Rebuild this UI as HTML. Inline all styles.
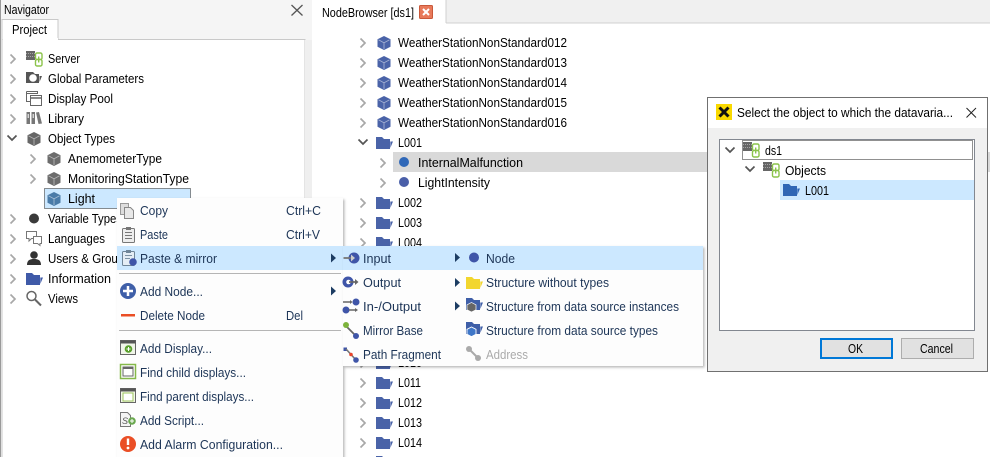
<!DOCTYPE html>
<html><head><meta charset="utf-8"><title>Navigator</title>
<style>
html,body{margin:0;padding:0;background:#fff;width:990px;height:457px;overflow:hidden}
svg{display:block;position:absolute;left:0;top:0}
text{font-family:"Liberation Sans",sans-serif;font-size:12.5px;fill:#000}
.m text,text.m{fill:#1d3557}
</style></head><body>
<svg width="990" height="457" viewBox="0 0 990 457">
<defs>
<filter id="sh" x="-5%" y="-5%" width="112%" height="112%"><feDropShadow dx="1.5" dy="1.5" stdDeviation="1.200" flood-color="#000" flood-opacity=".28"/></filter>
<path id="cr" d="M-2.500 -4.500L2 0L-2.500 4.500" fill="none" stroke="#a8a8a8" stroke-width="1.700"/>
<path id="cd" d="M-4.500 -2.500L0 2L4.500 -2.500" fill="none" stroke="#555" stroke-width="1.700"/>
<g id="cube"><path d="M7 0L13.500 3.200V10.800L7 14L.5 10.800V3.200Z" fill="currentColor"/><path d="M1.500 3.800L7 6.800L12.500 3.800M7 6.800V13" fill="none" stroke="#fff" stroke-opacity=".55" stroke-width=".8"/></g>
<g id="fold"><path d="M0 0H6L8 2H14V12H0Z" fill="currentColor"/><path d="M14.300 4.500H17L14.300 11Z" fill="currentColor"/></g>
<path id="arr" d="M0 -4.500L5 0L0 4.500Z" fill="#1d3d63"/>
<g id="srv"><rect x="0" y="0" width="9" height="9" fill="#666"/><path d="M0 2.500h9M0 5.500h9" stroke="#bbb" stroke-width=".7" stroke-dasharray="1 1"/><rect x="9.500" y="2" width="6.500" height="6.500" rx="1.500" fill="#fff" stroke="#8bc34a" stroke-width="1.400"/><rect x="9.500" y="8.500" width="6.500" height="6.500" rx="1.500" fill="#fff" stroke="#8bc34a" stroke-width="1.400"/><path d="M12.700 5.500v6" stroke="#8bc34a" stroke-width="1.400"/></g>
</defs>

<!-- left panel -->
<rect x="0" y="0" width="312" height="457" fill="#f5f5f5"/>
<rect x="0" y="0" width="1" height="457" fill="#9a9a9a"/>
<rect x="2" y="39.500" width="303" height="420" fill="#fff" stroke="#c9c9c9"/>
<rect x="305" y="40" width="7" height="417" fill="#efefef"/>
<path d="M2 39.500V19.500H58V40" fill="#fff" stroke="#c9c9c9"/>
<rect x="3" y="38" width="55" height="3" fill="#fff"/>
<text x="4" y="14" textLength="45" lengthAdjust="spacingAndGlyphs">Navigator</text>
<text x="12" y="34" textLength="35" lengthAdjust="spacingAndGlyphs">Project</text>
<path d="M291.500 5L302.500 15.500M302.500 5L291.500 15.500" stroke="#555" stroke-width="1.300"/>

<use href="#cr" x="13" y="59"/><use href="#cr" x="13" y="79"/><use href="#cr" x="13" y="99"/><use href="#cr" x="13" y="119"/>
<use href="#cd" x="12" y="138"/>
<use href="#cr" x="33" y="159"/><use href="#cr" x="33" y="179"/>
<use href="#cr" x="13" y="219"/><use href="#cr" x="13" y="239"/><use href="#cr" x="13" y="259"/><use href="#cr" x="13" y="279"/><use href="#cr" x="13" y="299"/>

<use href="#srv" x="26" y="51"/>
<!-- global params -->
<path d="M26 72H33L35 74H39V83H26Z" fill="#555"/><circle cx="33" cy="78" r="3.800" fill="#fff"/><path d="M39.500 76H42L39.500 82Z" fill="#555"/>
<!-- display pool -->
<path d="M26.500 91.500H37.500V94M26.500 91.500V101.500H30" fill="none" stroke="#666"/><path d="M26.500 93.500H37" stroke="#666"/>
<rect x="30.500" y="95.500" width="11" height="10" fill="#fff" stroke="#666"/><path d="M30.500 98H41.500" stroke="#666" stroke-width="1.500"/>
<!-- library -->
<path d="M26.500 112h3.500v12h-3.500zM31.500 112h3.500v12h-3.500z" fill="#777"/><path d="M28.200 114v4M33.200 114v4" stroke="#fff"/><path d="M36 112.500l3-.5 3 11.500-3.500 .5z" fill="#777"/>
<use href="#cube" x="27" y="132" style="color:#666"/>
<use href="#cube" x="47" y="152" style="color:#6c6c6c"/>
<use href="#cube" x="47" y="172" style="color:#6c6c6c"/>
<rect x="44.500" y="188.500" width="146" height="20" fill="#cce8ff" stroke="#222" stroke-dasharray="1 1"/>
<use href="#cube" x="47" y="192" style="color:#4a7ba8"/>
<circle cx="34" cy="218.500" r="5" fill="#3a3a3a"/>
<!-- languages -->
<path d="M26.500 231.500h10v7h-5l-2.500 2.500v-2.500h-2.500z" fill="#fff" stroke="#777"/><path d="M33.500 236.500h8v7h-1.500v2l-2.500-2h-4z" fill="#fff" stroke="#777"/>
<!-- users -->
<circle cx="34" cy="255" r="3.800" fill="#333"/><path d="M27 265c0-5 3-6 7-6s7 1 7 6z" fill="#333"/>
<use href="#fold" x="26" y="273" style="color:#3f5aa8"/>
<circle cx="31.500" cy="296" r="4.500" fill="none" stroke="#666" stroke-width="1.500"/><path d="M35 299.500L41 305.500" stroke="#666" stroke-width="2"/>

<text x="48" y="63" textLength="32" lengthAdjust="spacingAndGlyphs">Server</text>
<text x="48" y="83" textLength="96" lengthAdjust="spacingAndGlyphs">Global Parameters</text>
<text x="48" y="103" textLength="65" lengthAdjust="spacingAndGlyphs">Display Pool</text>
<text x="48" y="123" textLength="36" lengthAdjust="spacingAndGlyphs">Library</text>
<text x="48" y="143" textLength="67" lengthAdjust="spacingAndGlyphs">Object Types</text>
<text x="68" y="163" textLength="94" lengthAdjust="spacingAndGlyphs">AnemometerType</text>
<text x="68" y="183" textLength="121" lengthAdjust="spacingAndGlyphs">MonitoringStationType</text>
<text x="68" y="203" textLength="27" lengthAdjust="spacingAndGlyphs">Light</text>
<text x="48" y="223" textLength="74" lengthAdjust="spacingAndGlyphs">Variable Types</text>
<text x="48" y="243" textLength="57" lengthAdjust="spacingAndGlyphs">Languages</text>
<text x="48" y="263" textLength="82" lengthAdjust="spacingAndGlyphs">Users &amp; Groups</text>
<text x="48" y="283" textLength="63" lengthAdjust="spacingAndGlyphs">Information</text>
<text x="48" y="303" textLength="30" lengthAdjust="spacingAndGlyphs">Views</text>

<!-- node browser -->
<rect x="312" y="0" width="678" height="23" fill="#f0f0f0"/>
<rect x="312" y="22.500" width="678" height="1" fill="#d0d0d0"/>
<rect x="312" y="0" width="134" height="24" fill="#fff"/>
<rect x="445.500" y="0" width="1" height="23" fill="#d0d0d0"/>
<text x="322" y="17" textLength="92" lengthAdjust="spacingAndGlyphs">NodeBrowser [ds1]</text>
<rect x="419.500" y="5.500" width="13" height="13" rx="1" fill="#e8795a" stroke="#c9583a"/><path d="M423 9L429 15M429 9L423 15" stroke="#fff" stroke-width="2"/>

<rect x="393" y="152" width="597" height="20" fill="#d9d9d9"/>

<g>
<use href="#cr" x="363" y="43"/><use href="#cr" x="363" y="63"/><use href="#cr" x="363" y="83"/><use href="#cr" x="363" y="103"/><use href="#cr" x="363" y="123"/>
<use href="#cd" x="363" y="142"/>
<use href="#cr" x="383" y="163"/><use href="#cr" x="383" y="183"/>
<use href="#cr" x="363" y="203"/><use href="#cr" x="363" y="223"/><use href="#cr" x="363" y="243"/><use href="#cr" x="363" y="363"/>
<use href="#cr" x="363" y="383"/><use href="#cr" x="363" y="403"/><use href="#cr" x="363" y="423"/><use href="#cr" x="363" y="443"/>
<g style="color:#4a63a8">
<use href="#cube" x="377" y="36"/><use href="#cube" x="377" y="56"/><use href="#cube" x="377" y="76"/><use href="#cube" x="377" y="96"/><use href="#cube" x="377" y="116"/>
<use href="#fold" x="376" y="137"/><use href="#fold" x="376" y="197"/><use href="#fold" x="376" y="217"/><use href="#fold" x="376" y="237"/>
<use href="#fold" x="376" y="357"/><use href="#fold" x="376" y="377"/><use href="#fold" x="376" y="397"/><use href="#fold" x="376" y="417"/><use href="#fold" x="376" y="437"/><use href="#fold" x="376" y="456"/>
</g>
<circle cx="404" cy="162" r="5" fill="#3068b8"/>
<circle cx="404" cy="182" r="5" fill="#4a5fa8"/>
<text x="398" y="47" textLength="169" lengthAdjust="spacingAndGlyphs">WeatherStationNonStandard012</text>
<text x="398" y="67" textLength="169" lengthAdjust="spacingAndGlyphs">WeatherStationNonStandard013</text>
<text x="398" y="87" textLength="169" lengthAdjust="spacingAndGlyphs">WeatherStationNonStandard014</text>
<text x="398" y="107" textLength="169" lengthAdjust="spacingAndGlyphs">WeatherStationNonStandard015</text>
<text x="398" y="127" textLength="169" lengthAdjust="spacingAndGlyphs">WeatherStationNonStandard016</text>
<text x="398" y="147" textLength="24" lengthAdjust="spacingAndGlyphs">L001</text>
<text x="418" y="167" textLength="105" lengthAdjust="spacingAndGlyphs">InternalMalfunction</text>
<text x="418" y="187" textLength="72" lengthAdjust="spacingAndGlyphs">LightIntensity</text>
<text x="398" y="207" textLength="24" lengthAdjust="spacingAndGlyphs">L002</text>
<text x="398" y="227" textLength="24" lengthAdjust="spacingAndGlyphs">L003</text>
<text x="398" y="247" textLength="24" lengthAdjust="spacingAndGlyphs">L004</text>
<text x="398" y="367" textLength="24" lengthAdjust="spacingAndGlyphs">L010</text>
<text x="398" y="387" textLength="23" lengthAdjust="spacingAndGlyphs">L011</text>
<text x="398" y="407" textLength="24" lengthAdjust="spacingAndGlyphs">L012</text>
<text x="398" y="427" textLength="24" lengthAdjust="spacingAndGlyphs">L013</text>
<text x="398" y="447" textLength="24" lengthAdjust="spacingAndGlyphs">L014</text>
</g>

<!-- context menu -->
<g class="m">
<rect x="117" y="198" width="226" height="262" fill="#fdfdfd" filter="url(#sh)"/>
<rect x="117" y="246" width="226" height="24" fill="#cce8ff"/>
<rect x="119" y="273" width="222" height="1" fill="#b5b5b5"/>
<rect x="119" y="330" width="222" height="1" fill="#b5b5b5"/>
<!-- copy -->
<rect x="120.500" y="203.500" width="8" height="11" fill="#ddd" stroke="#999"/><path d="M124.500 207.500h6l3 3v8h-9z" fill="#e8e8e8" stroke="#888"/>
<!-- paste -->
<rect x="122.500" y="228.500" width="12" height="14" rx="1" fill="#eee" stroke="#777"/><rect x="126" y="227" width="5" height="3" fill="#777"/><path d="M125 232.500h7M125 235.500h7M125 238.500h7" stroke="#777"/>
<!-- paste mirror -->
<rect x="122.500" y="251.500" width="12" height="14" rx="1" fill="#e4edf5" stroke="#6f8598"/><rect x="126" y="250" width="5" height="3" fill="#6f8598"/><path d="M125 255.500h7M125 258.500h5" stroke="#7d93a5"/><circle cx="133" cy="262" r="3.800" fill="#3f55a8"/>
<!-- add node -->
<circle cx="128" cy="291" r="8" fill="#3f5fa8"/><path d="M128 286v10M123 291h10" stroke="#fff" stroke-width="2.500"/>
<!-- delete -->
<rect x="121" y="314" width="14" height="2.500" fill="#ea4e25"/>
<!-- add display -->
<rect x="120.500" y="340.500" width="15" height="14" fill="#f0f5e8" stroke="#666"/><rect x="120.500" y="340.500" width="15" height="3" fill="#555"/><circle cx="128.500" cy="349" r="3.800" fill="#5aa02c"/><path d="M126.500 349h4M128.500 347v4" stroke="#fff"/>
<!-- find child -->
<rect x="120.500" y="364.500" width="15" height="14" fill="#fff" stroke="#85b84a" stroke-width="1.500"/><rect x="123" y="367" width="10" height="9" fill="#fff" stroke="#666"/><rect x="123" y="367" width="10" height="2" fill="#666"/>
<!-- find parent -->
<rect x="120.500" y="388.500" width="15" height="14" fill="#f4f8e8" stroke="#666"/><rect x="120.500" y="388.500" width="15" height="3" fill="#555"/><rect x="123" y="393" width="10" height="8" fill="#fff" stroke="#9cc45e"/>
<!-- add script -->
<path d="M120.500 412.500h7l3 3v11h-10z" fill="#f4f4f4" stroke="#777"/><text x="122" y="424" style="font-size:9px;font-style:italic;fill:#555">S</text><circle cx="132" cy="421" r="3.800" fill="#6aa84f"/><path d="M130 421h4M132 419v4" stroke="#fff"/>
<!-- alarm -->
<circle cx="128" cy="444" r="8" fill="#ea4e25"/><path d="M128 438.500v6.500" stroke="#fff" stroke-width="2.400"/><circle cx="128" cy="448" r="1.400" fill="#fff"/>
<use href="#arr" x="331" y="291"/>

<text x="140" y="215" textLength="28" lengthAdjust="spacingAndGlyphs">Copy</text>
<text x="286" y="215" textLength="35" lengthAdjust="spacingAndGlyphs">Ctrl+C</text>
<text x="140" y="239" textLength="28" lengthAdjust="spacingAndGlyphs">Paste</text>
<text x="286" y="239" textLength="34" lengthAdjust="spacingAndGlyphs">Ctrl+V</text>
<text x="140" y="263" textLength="77" lengthAdjust="spacingAndGlyphs">Paste &amp; mirror</text>
<text x="140" y="296" textLength="63" lengthAdjust="spacingAndGlyphs">Add Node...</text>
<text x="140" y="320" textLength="65" lengthAdjust="spacingAndGlyphs">Delete Node</text>
<text x="286" y="320" textLength="17" lengthAdjust="spacingAndGlyphs">Del</text>
<text x="140" y="353" textLength="72" lengthAdjust="spacingAndGlyphs">Add Display...</text>
<text x="140" y="377" textLength="106" lengthAdjust="spacingAndGlyphs">Find child displays...</text>
<text x="140" y="401" textLength="114" lengthAdjust="spacingAndGlyphs">Find parent displays...</text>
<text x="140" y="425" textLength="64" lengthAdjust="spacingAndGlyphs">Add Script...</text>
<text x="140" y="449" textLength="143" lengthAdjust="spacingAndGlyphs">Add Alarm Configuration...</text>
</g>

<!-- submenus -->
<g class="m">
<rect x="343" y="246" width="360" height="120" fill="#fdfdfd" filter="url(#sh)"/>
<rect x="343" y="246" width="360" height="24" fill="#cce8ff"/>
<use href="#arr" x="331" y="258"/>
<use href="#arr" x="455" y="257.500"/><use href="#arr" x="455" y="282.500"/><use href="#arr" x="455" y="306"/>
<!-- input -->
<circle cx="354" cy="258" r="5.500" fill="#3f55a8"/><path d="M343.500 258H354" stroke="#777" stroke-width="1.800"/><path d="M351 254.500l4 3.500-4 3.500z" fill="#ccc"/>
<!-- output -->
<circle cx="348" cy="282" r="5.500" fill="#3f55a8"/><circle cx="348.500" cy="282" r="2.300" fill="#fff"/><path d="M349 282h8" stroke="#666" stroke-width="1.700"/><path d="M355 279l3.500 3-3.500 3z" fill="#666"/>
<!-- in-out -->
<circle cx="356" cy="302" r="3.500" fill="#3f55a8"/><circle cx="346" cy="310" r="3.500" fill="#3f55a8"/><path d="M343 302h8M349 310h7" stroke="#666" stroke-width="1.400"/><path d="M350 300l2.500 2-2.500 2zM355 308l3 2-3 2z" fill="#666"/>
<!-- mirror base -->
<path d="M346 326L356 336" stroke="#666" stroke-width="1.800"/><circle cx="346" cy="325" r="3" fill="#7db33c"/><circle cx="356" cy="336" r="3" fill="#3f55a8"/>
<!-- path fragment -->
<rect x="343.500" y="347.500" width="3.500" height="3.500" fill="#3f55a8"/><path d="M346 349L356 360" stroke="#777" stroke-width="1.600"/><circle cx="351" cy="354.500" r="1.800" fill="#e8452c"/><circle cx="356" cy="360" r="2.800" fill="#3f55a8"/>
<!-- sub 2 icons -->
<circle cx="474" cy="257.500" r="5" fill="#3f55a8"/>
<use href="#fold" x="466" y="277" style="color:#f2d62e"/>
<use href="#fold" x="466" y="298" style="color:#3f5fa8"/><path d="M471.500 302.500l4.500 2.300v5l-4.500 2.300-4.500-2.300v-5z" fill="#666" stroke="#fff" stroke-width=".7"/>
<use href="#fold" x="466" y="322" style="color:#3f5fa8"/><path d="M471.500 327l4.500 2.300v5l-4.500 2.300-4.500-2.300v-5z" fill="#3f77c8" stroke="#fff" stroke-width=".9"/>
<path d="M469 349L478 358" stroke="#aaa" stroke-width="2"/><circle cx="469" cy="349" r="3" fill="#aaa"/><circle cx="478" cy="358" r="3" fill="#aaa"/>

<text x="363" y="263" textLength="28" lengthAdjust="spacingAndGlyphs">Input</text>
<text x="363" y="287" textLength="38" lengthAdjust="spacingAndGlyphs">Output</text>
<text x="363" y="311" textLength="58" lengthAdjust="spacingAndGlyphs">In-/Output</text>
<text x="363" y="335" textLength="60" lengthAdjust="spacingAndGlyphs">Mirror Base</text>
<text x="363" y="359" textLength="78" lengthAdjust="spacingAndGlyphs">Path Fragment</text>
<text x="486" y="263" textLength="29" lengthAdjust="spacingAndGlyphs">Node</text>
<text x="486" y="287" textLength="123" lengthAdjust="spacingAndGlyphs">Structure without types</text>
<text x="486" y="311" textLength="193" lengthAdjust="spacingAndGlyphs">Structure from data source instances</text>
<text x="486" y="335" textLength="172" lengthAdjust="spacingAndGlyphs">Structure from data source types</text>
<text x="486" y="359" textLength="42" lengthAdjust="spacingAndGlyphs" style="fill:#aaa">Address</text>
</g>

<!-- dialog -->
<rect x="707.500" y="97.500" width="280" height="274" fill="#f0f0f0" stroke="#707070"/>
<rect x="708" y="98" width="279" height="30" fill="#fff"/>
<rect x="716" y="104" width="16" height="16" fill="#f9d900"/>
<path d="M719.500 107.500L728.500 116.500M728.500 107.500L719.500 116.500" stroke="#111" stroke-width="3"/>
<text x="737" y="117" textLength="216" lengthAdjust="spacingAndGlyphs">Select the object to which the datavaria...</text>
<path d="M966.500 108L976 117.500M976 108L966.500 117.500" stroke="#222"/>
<rect x="719.500" y="139.500" width="255" height="191" fill="#fff" stroke="#828790"/>
<rect x="742.500" y="140.500" width="230" height="19" fill="#fff" stroke="#222" stroke-dasharray="1 1"/>
<rect x="780" y="180" width="194" height="20" fill="#cce8ff"/>
<use href="#cd" x="730" y="150"/><use href="#cd" x="750" y="169"/>
<use href="#srv" x="743" y="142"/><use href="#srv" x="763" y="162"/>
<use href="#fold" x="783" y="184" style="color:#2f66b5"/>
<text x="765" y="155" textLength="17" lengthAdjust="spacingAndGlyphs">ds1</text>
<text x="785" y="175" textLength="41" lengthAdjust="spacingAndGlyphs">Objects</text>
<text x="805" y="195" textLength="24" lengthAdjust="spacingAndGlyphs">L001</text>
<rect x="821" y="339" width="71" height="19" fill="#e1e1e1" stroke="#0078d7" stroke-width="2"/>
<text x="848" y="353" textLength="15" lengthAdjust="spacingAndGlyphs">OK</text>
<rect x="901.500" y="338.500" width="72" height="20" fill="#e1e1e1" stroke="#adadad"/>
<text x="920" y="353" textLength="33" lengthAdjust="spacingAndGlyphs">Cancel</text>
</svg>
</body></html>
